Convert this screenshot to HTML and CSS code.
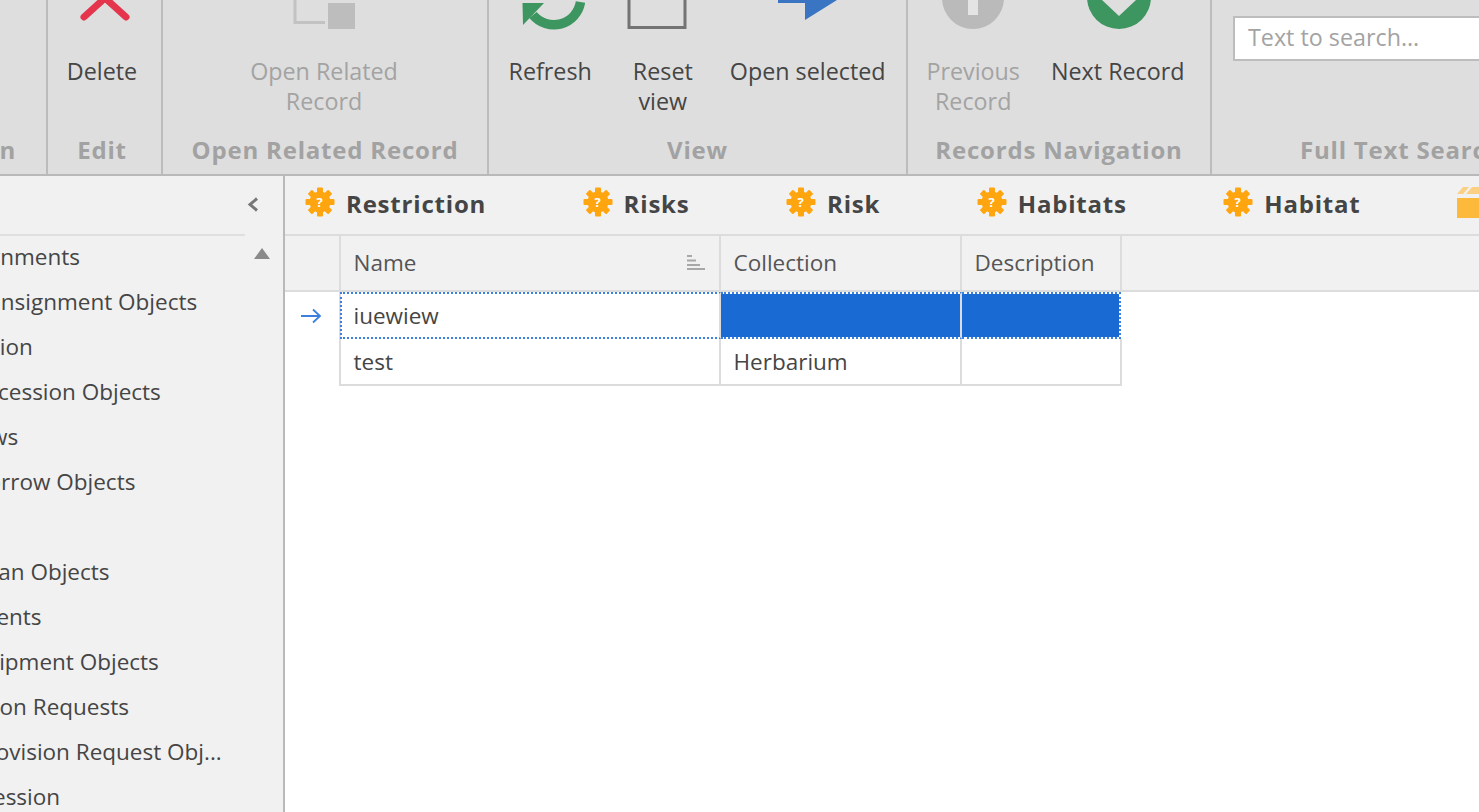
FILE: index.html
```html
<!DOCTYPE html>
<html lang="en">
<head>
<meta charset="utf-8">
<title>Records</title>
<link rel="stylesheet" href="styles.css">
</head>
<body>
<svg class="defs" width="0" height="0" aria-hidden="true">
  <symbol id="gear" viewBox="0 0 30 30">
    <g fill="#ffa50f">
      <circle cx="15" cy="15" r="10.5"/>
      <rect x="12" y="0.5" width="6" height="29" rx="1"/>
      <rect x="12" y="0.5" width="6" height="29" rx="1" transform="rotate(45 15 15)"/>
      <rect x="12" y="0.5" width="6" height="29" rx="1" transform="rotate(90 15 15)"/>
      <rect x="12" y="0.5" width="6" height="29" rx="1" transform="rotate(135 15 15)"/>
    </g>
    <text x="15" y="20" text-anchor="middle" class="gear-q">?</text>
  </symbol>
</svg>
<div class="app">
  <header class="ribbon">
    <section class="group group-clip">
      <div class="group-body"></div>
      <div class="group-label">Action</div>
    </section>
    <section class="group group-edit">
      <div class="group-body">
        <div class="btn">
          <svg class="icon icon-delete" width="60" height="30"><path d="M9 17 L30 -2 L51 17" fill="none" stroke="#e5354c" stroke-width="7" stroke-linecap="round"/></svg>
          <div class="btn-text">Delete</div>
        </div>
      </div>
      <div class="group-label">Edit</div>
    </section>
    <section class="group group-related">
      <div class="group-body">
        <div class="btn btn-off">
          <svg class="icon" width="64" height="30"><path d="M3 0 V22.500 H33" fill="none" stroke="#c2c2c2" stroke-width="3"/><rect x="36" y="3" width="27" height="26" fill="#bdbdbd"/></svg>
          <div class="btn-text">Open Related<br>Record</div>
        </div>
      </div>
      <div class="group-label">Open Related Record</div>
    </section>
    <section class="group group-view">
      <div class="group-body">
        <div class="btn">
          <svg class="icon icon-refresh" width="66" height="30"><path d="M14 15 A27 27 0 0 0 61.500 2" fill="none" stroke="#3d9560" stroke-width="9.500"/><path d="M3.500 3 H25 L4 25 Z" fill="#3d9560"/></svg>
          <div class="btn-text">Refresh</div>
        </div>
        <div class="btn btn-reset">
          <svg class="icon icon-reset" width="60" height="30"><path d="M2 0 V27.500 H58 V0" fill="none" stroke="#737373" stroke-width="3"/></svg>
          <div class="btn-text">Reset<br>view</div>
        </div>
        <div class="btn">
          <svg class="icon" width="60" height="30"><path d="M0 0 V3 H27 V20 L59 0 Z" fill="#3a75c4"/></svg>
          <div class="btn-text">Open selected</div>
        </div>
      </div>
      <div class="group-label">View</div>
    </section>
    <section class="group group-nav">
      <div class="group-body">
        <div class="btn btn-off">
          <svg class="icon" width="64" height="30"><circle cx="32" cy="-2" r="31" fill="#bababa"/><rect x="27" y="0" width="10" height="15" fill="#e4e4e4"/></svg>
          <div class="btn-text">Previous<br>Record</div>
        </div>
        <div class="btn">
          <svg class="icon icon-next" width="66" height="30"><circle cx="33" cy="-3" r="32" fill="#3d9560"/><path d="M16 0 L33 16 L50 0 Z" fill="#dedede"/></svg>
          <div class="btn-text">Next Record</div>
        </div>
      </div>
      <div class="group-label">Records Navigation</div>
    </section>
    <section class="group group-search">
      <div class="group-body">
        <div class="search-box">Text to search…</div>
      </div>
      <div class="group-label">Full Text Search</div>
    </section>
  </header>

  <div class="main">
    <aside class="sidebar">
      <div class="side-head">
        <svg width="12" height="15" viewBox="0 0 12 15"><path d="M10 1.500 L3 7.500 L10 13.500" fill="none" stroke="#777" stroke-width="3"/></svg>
      </div>
      <svg class="side-scroll" width="16" height="12" viewBox="0 0 16 12"><path d="M8 0 L16 11 H0 Z" fill="#8a8a8a"/></svg>
      <ul class="tree">
        <li class="node">Consignments</li>
        <li class="leaf">Consignment Objects</li>
        <li class="node">Accession</li>
        <li class="leaf">Accession Objects</li>
        <li class="node">Borrows</li>
        <li class="leaf">Borrow Objects</li>
        <li class="node">Loans</li>
        <li class="leaf">Loan Objects</li>
        <li class="node">Shipments</li>
        <li class="leaf">Shipment Objects</li>
        <li class="node">Provision Requests</li>
        <li class="leaf">Provision Request Obj...</li>
        <li class="node">Deaccession</li>
      </ul>
    </aside>

    <div class="content">
      <nav class="tabs">
        <div class="tab"><svg class="tab-icon" width="30" height="30"><use href="#gear"/></svg>Restriction</div>
        <div class="tab"><svg class="tab-icon" width="30" height="30"><use href="#gear"/></svg>Risks</div>
        <div class="tab"><svg class="tab-icon" width="30" height="30"><use href="#gear"/></svg>Risk</div>
        <div class="tab"><svg class="tab-icon" width="30" height="30"><use href="#gear"/></svg>Habitats</div>
        <div class="tab"><svg class="tab-icon" width="30" height="30"><use href="#gear"/></svg>Habitat</div>
        <div class="tab"><svg class="tab-icon" width="34" height="32"><path d="M0 8 L6 1 H12 L6 8 Z M9 8 L15 1 H34 V8 Z" fill="#fbd083"/><rect x="0" y="12" width="34" height="20" fill="#fdb93c"/></svg>Objects</div>
      </nav>
      <div class="grid">
        <div class="cell head indicator"></div>
        <div class="cell head first">Name
          <svg class="sort" width="18" height="15" viewBox="0 0 18 15"><path d="M0 1 H5 M0 5.500 H9 M0 10 H13 M0 14 H18" stroke="#a8a8a8" stroke-width="2"/></svg>
        </div>
        <div class="cell head">Collection</div>
        <div class="cell head">Description</div>
        <div class="cell head filler"></div>

        <div class="cell indicator row-mark">
          <svg width="22" height="16" viewBox="0 0 22 16"><path d="M1 8 H20 M13 1.500 L20 8 L13 14.500" fill="none" stroke="#3a80dc" stroke-width="1.800"/></svg>
        </div>
        <div class="cell focus focus-left">iuewiew</div>
        <div class="cell focus selected"></div>
        <div class="cell focus selected focus-right"></div>
        <div class="cell blank"></div>

        <div class="cell indicator"></div>
        <div class="cell body first">test</div>
        <div class="cell body">Herbarium</div>
        <div class="cell body"></div>
        <div class="cell blank"></div>
      </div>
    </div>
  </div>
</div>
</body>
</html>
```
FILE: styles.css
```css
* { box-sizing: border-box; }
html, body { margin: 0; padding: 0; height: 100%; overflow: hidden; }
body {
  background: #fff;
  color: #454545;
  font-family: "Open Sans", "Noto Sans", sans-serif;
  font-size: 22.5px;
  line-height: 30px;
}
.defs { position: absolute; }
.gear-q { font-size: 13px; font-weight: 700; fill: #fff; font-family: "Open Sans", sans-serif; }

.app { display: flex; flex-direction: column; width: 1479px; height: 812px; overflow: hidden; }

/* ribbon */
.ribbon {
  display: flex;
  flex: none;
  height: 176px;
  background: #dedede;
  border-bottom: 2px solid #b9b9b9;
  overflow: hidden;
  font-size: 23.3px;
}
.group {
  display: flex;
  flex-direction: column;
  flex: none;
  height: 174px;
  border-right: 2px solid #bcbcbc;
  overflow: hidden;
}
.group-clip { width: 48px; align-items: flex-end; }
.group-edit { width: 115px; }
.group-related { width: 326px; }
.group-view { width: 419px; }
.group-nav { width: 304px; }
.group-search { flex: 1 0 auto; width: 320px; border-right: 0; }
.group-body { display: flex; justify-content: center; height: 135px; flex: none; }
.group-edit .group-body { padding-right: 5px; }
.group-related .group-body { padding-right: 2px; }
.group-view .group-body { justify-content: flex-start; padding-left: 2px; }
.group-nav .group-body { padding-right: 7px; }
.group-label {
  height: 38px;
  font-weight: 700;
  font-size: 24px;
  letter-spacing: 0.8px;
  line-height: 30px;
  color: #a2a2a2;
  text-align: center;
  white-space: nowrap;
}
.group-edit .group-label { padding-right: 5px; }
.group-clip .group-label { padding-right: 30px; }
.btn { display: flex; flex-direction: column; align-items: center; padding: 0 17.5px; text-align: center; white-space: nowrap; }
.group-nav .btn { padding: 0 15.5px; }
.btn-reset { padding: 0 19.5px 0 23.5px; }
.icon { display: block; flex: none; margin-bottom: 26px; overflow: hidden; }
.icon-reset { margin-left: -6px; margin-right: 6px; }
.icon-refresh { margin-left: 3px; }
.icon-delete { margin-left: 5px; }
.icon-next { margin-left: 3px; }
.btn-off { color: #a3a3a3; }

.search-box {
  width: 300px;
  height: 45px;
  margin: 16px 0 0 21px;
  padding: 0 13px;
  background: #fff;
  border: 2px solid #bdbdbd;
  color: #a3a3a3;
  line-height: 39px;
  white-space: nowrap;
}
.group-search .group-body { justify-content: flex-start; }
.group-search .group-label { text-align: left; padding-left: 88px; }

/* main */
.main { display: flex; flex: 1; min-height: 0; }
.sidebar {
  position: relative;
  flex: none;
  width: 285px;
  background: #f1f1f1;
  border-right: 2px solid #b9b9b9;
  overflow: hidden;
}
.side-head {
  display: flex;
  justify-content: flex-end;
  align-items: center;
  width: 245px;
  height: 60px;
  border-bottom: 2px solid #dfdfdf;
}
.side-head svg { margin-right: -14px; flex: none; margin-top: -2px; }
.side-scroll { position: absolute; top: 72px; right: 13px; }
.tree { list-style: none; margin: 0; padding: 0; white-space: nowrap; }
.tree li { height: 45px; line-height: 42px; }
.node { margin-left: -70px; }
.leaf { margin-left: -27px; }

/* tabs */
.content { display: flex; flex-direction: column; flex: 1; min-width: 0; }
.tabs {
  display: flex;
  flex: none;
  gap: 96.5px;
  height: 60px;
  padding-left: 20px;
  padding-bottom: 2px;
  background: #f1f1f1;
  border-bottom: 2px solid #dcdcdc;
  overflow: hidden;
  white-space: nowrap;
}
.tab {
  display: flex;
  align-items: center;
  flex: none;
  font-weight: 700;
  font-size: 24px;
  letter-spacing: 0.8px;
  color: #454545;
}
.tab-icon { flex: none; margin-right: 11px; margin-top: -4px; }

/* grid */
.grid {
  display: grid;
  grid-template-columns: 56px 380px 241px 160px 1fr;
  grid-template-rows: 56px 47px 47px;
}
.cell { padding: 0 12.5px; white-space: nowrap; }
.head {
  display: flex;
  align-items: center;
  justify-content: space-between;
  background: #f1f1f1;
  border-right: 2px solid #dcdcdc;
  border-bottom: 2px solid #dcdcdc;
  color: #555;
  padding-bottom: 1px;
}
.filler { border-right: 0; }
.sort { flex: none; margin-right: 2px; }
.indicator.head { background: #f1f1f1; }
.indicator:not(.head) { border-right: 2px solid #dcdcdc; }
.row-mark { display: flex; align-items: center; padding: 0 0 0 15px; }
.body {
  display: flex;
  align-items: center;
  border-right: 2px solid #dcdcdc;
  border-bottom: 2px solid #dcdcdc;
}
.focus {
  display: flex;
  align-items: center;
  border-top: 2px dotted #3a80dc;
  border-bottom: 2px dotted #3a80dc;
  border-right: 2px solid #dcdcdc;
}
.focus-left { border-left: 2px dotted #3a80dc; padding-left: 11.5px; margin-left: -1px; }
.focus-right { border-right: 2px dotted #3a80dc; margin-right: 1px; }
.selected { background: #196bd3; background-clip: padding-box; }
.blank { background: #fff; }
```
